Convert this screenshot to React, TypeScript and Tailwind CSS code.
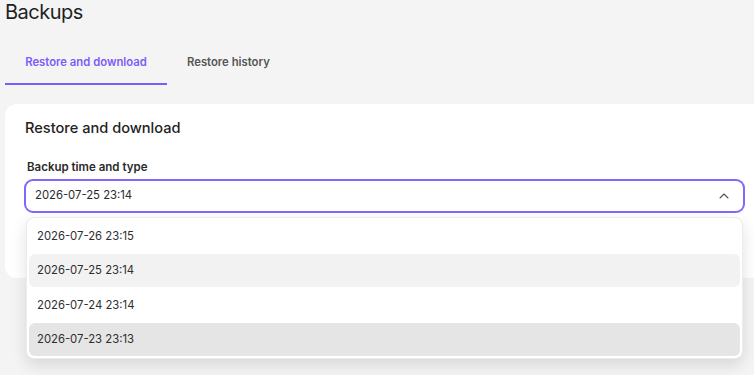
import { ChevronUp } from "lucide-react";

const options = [
  { label: "2026-07-26 23:15", bg: "" },
  { label: "2026-07-25 23:14", bg: "bg-[#f2f2f2]" },
  { label: "2026-07-24 23:14", bg: "" },
  { label: "2026-07-23 23:13", bg: "bg-[#e5e5e5]" },
];

export default function App() {
  return (
    <div
      className="h-[375px] w-[754px] overflow-hidden bg-[#f4f4f4] pl-[5px] text-[#222]"
      style={{ fontFamily: "Inter, 'Noto Sans', sans-serif" }}
    >
      <h1 className="mt-[-1px] text-[20px] leading-[26px] font-normal tracking-[-0.5px] text-[#1f1f1f]">Backups</h1>

      <div className="mt-[24px] flex text-[11.3px] font-semibold">
        <div className="w-[162px] border-b-2 border-[#7c5cfa] pb-[12px] pt-[5px] text-center text-[#7c5cfa]">
          Restore and download
        </div>
        <div className="px-5 pb-[12px] pt-[5px] text-[#555]">Restore history</div>
      </div>

      <div className="mt-[19px] mr-[-30px] h-[174px] rounded-l-[12px] bg-white pl-[19px] pr-[39px] pt-[14px]">
        <h2 className="pl-[1px] text-[14.6px] leading-[20px] font-medium text-[#222]">Restore and download</h2>
        <div className="mt-[21px] pl-[3px] text-[11.5px] leading-[16px] font-semibold text-[#2a2a2a]">
          Backup time and type
        </div>
        <div className="relative mt-[4px]">
          <div className="flex h-[34px] items-center justify-between rounded-[9px] border-2 border-[#8466ff] pl-[9px] pr-[11px] text-[11.3px] text-[#2a2a2a]">
            <span>2026-07-25 23:14</span>
            <ChevronUp size={16} strokeWidth={1.6} className="text-[#555]" />
          </div>
          <div className="absolute left-[2px] right-[2px] top-[38px] z-10 flex flex-col gap-[2px] rounded-[8px] border border-[#ececec] bg-white p-[2px] shadow-[0_6px_16px_rgba(0,0,0,0.12)]">
            {options.map((o) => (
              <div
                key={o.label}
                className={`flex h-[32.5px] items-center rounded-[6px] pl-[8px] text-[11.3px] text-[#2e2e2e] ${o.bg}`}
              >
                {o.label}
              </div>
            ))}
          </div>
        </div>
      </div>
    </div>
  );
}
